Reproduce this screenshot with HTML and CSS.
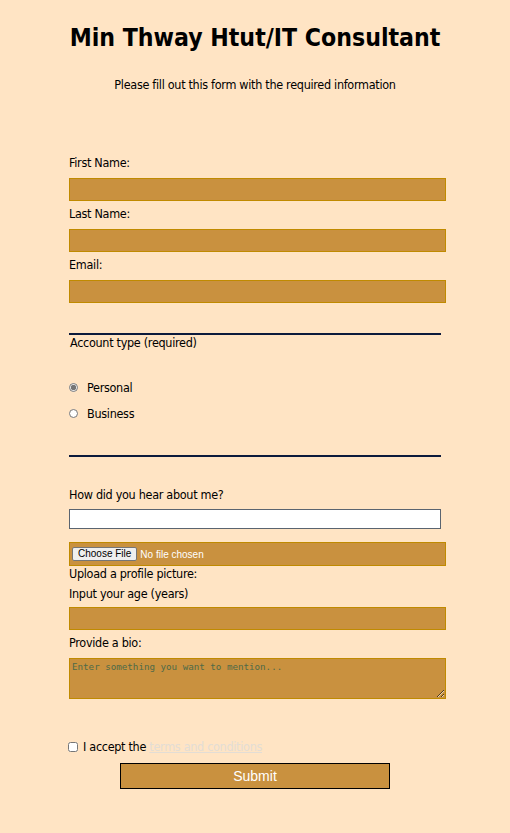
FILE: index.html
```html
<!DOCTYPE html>
<html>
<head>
<meta charset="utf-8">
<link rel="stylesheet" href="styles.css">
</head>
<body>
<h1 class="title">Min Thway Htut/IT Consultant</h1>
<p class="intro">Please fill out this form with the required information</p>
<form class="form">
  <label class="lbl">First Name:</label>
  <input class="field" type="text">
  <label class="lbl">Last Name:</label>
  <input class="field" type="text">
  <label class="lbl">Email:</label>
  <input class="field" type="email">

  <div class="account">
    <div class="legend">Account type (required)</div>
    <div class="radios">
      <label class="radio"><input type="radio" name="acct" checked><span>Personal</span></label>
      <label class="radio"><input type="radio" name="acct"><span>Business</span></label>
    </div>
  </div>

  <label class="lbl hear">How did you hear about me?</label>
  <input class="plain" type="text">

  <div class="file">
    <span class="file-btn">Choose File</span><span class="file-text">No file chosen</span>
  </div>
  <label class="lbl tight">Upload a profile picture:</label>
  <label class="lbl age">Input your age (years)</label>
  <input class="field" type="text">
  <label class="lbl">Provide a bio:</label>
  <textarea class="bio" placeholder="Enter something you want to mention..."></textarea>

  <div class="terms">
    <input type="checkbox" class="check"><span>I accept the <a href="#" class="link">terms and conditions</a></span>
  </div>
  <button type="button" class="submit">Submit</button>
</form>
</body>
</html>
```

FILE: styles.css
```css
html, body {
  margin: 0;
  padding: 0;
}
body {
  background: #ffe4c4;
  font-family: "DejaVu Sans Condensed", "DejaVu Sans", sans-serif;
  font-stretch: condensed;
  font-size: 12.5px;
  letter-spacing: -0.3px;
  color: #000;
  width: 510px;
}
.title {
  margin: 0;
  padding-top: 23px;
  text-align: center;
  font-family: "DejaVu Sans Condensed", "DejaVu Sans", sans-serif;
  font-stretch: condensed;
  font-size: 24.6px;
  letter-spacing: 0;
  line-height: 30px;
  font-weight: bold;
}
.intro {
  margin: 24px 0 0;
  text-align: center;
  line-height: 16px;
}
.form {
  width: 372px;
  margin: 62px auto 0;
  display: flex;
  flex-direction: column;
  align-items: flex-start;
}
.lbl {
  display: block;
  line-height: 16px;
  margin: 5px 0 7px;
}
.form > .lbl:first-child {
  margin-top: 0;
}
.field {
  box-sizing: border-box;
  width: 377px;
  height: 23px;
  margin: 0;
  background: #c9913f;
  border: 1px solid #c08a00;
  padding: 0 4px;
}
.account {
  width: 372px;
  margin-top: 30px;
  border-top: 2px solid #0c1a3c;
  border-bottom: 2px solid #0c1a3c;
  padding-bottom: 34px;
}
.legend {
  line-height: 16px;
  padding-left: 1px;
}
.radios {
  display: flex;
  flex-direction: column;
  gap: 10px;
  margin-top: 28px;
}
.radio {
  display: flex;
  align-items: center;
  height: 16px;
}
.radio input {
  margin: 0;
  width: 9px;
  height: 9px;
  accent-color: #757575;
}
.radio span {
  margin-left: 9px;
}
.lbl.hear {
  margin-top: 30px;
  margin-bottom: 6px;
}
.plain {
  box-sizing: border-box;
  width: 372px;
  height: 20px;
  margin: 0;
  background: #fff;
  border: 1px solid #5a6470;
}
.file {
  box-sizing: border-box;
  width: 377px;
  height: 24px;
  margin-top: 13px;
  background: #c9913f;
  border: 1px solid #c08a00;
  display: flex;
  align-items: center;
  padding-left: 2px;
  font-family: "Liberation Sans", Arial, sans-serif;
  font-stretch: normal;
  letter-spacing: 0;
  font-size: 10px;
}
.file-btn {
  box-sizing: border-box;
  height: 14px;
  line-height: 12px;
  padding: 0 5px;
  background: #efefef;
  border: 1px solid #767676;
  border-radius: 2px;
  color: #000;
}
.file-text {
  color: #fff;
  margin-left: 3px;
}
.lbl.tight {
  margin: 0;
}
.lbl.age {
  margin-top: 4px;
  margin-bottom: 5px;
}
.bio {
  box-sizing: border-box;
  width: 377px;
  height: 41px;
  margin: 0;
  background: #c9913f;
  border: 1px solid #c08a00;
  padding: 2px 2px;
  font-family: "DejaVu Sans Mono", monospace;
  font-stretch: normal;
  letter-spacing: 0;
  font-size: 9.2px;
  resize: both;
}
.bio::placeholder {
  color: #4f6a48;
}
.terms {
  display: flex;
  align-items: center;
  margin-top: 40px;
  margin-left: -1px;
  line-height: 16px;
}
.check {
  width: 10px;
  height: 10px;
  margin: 0 5px 0 0;
}
.link {
  color: #e3ddd5;
}
.submit {
  align-self: center;
  box-sizing: border-box;
  width: 270px;
  height: 26px;
  margin-top: 8px;
  background: #c9913f;
  border: 1px solid #000;
  color: #fff;
  font-family: "Liberation Sans", Arial, sans-serif;
  font-stretch: normal;
  letter-spacing: 0;
  font-size: 14px;
  padding: 0;
}
```
